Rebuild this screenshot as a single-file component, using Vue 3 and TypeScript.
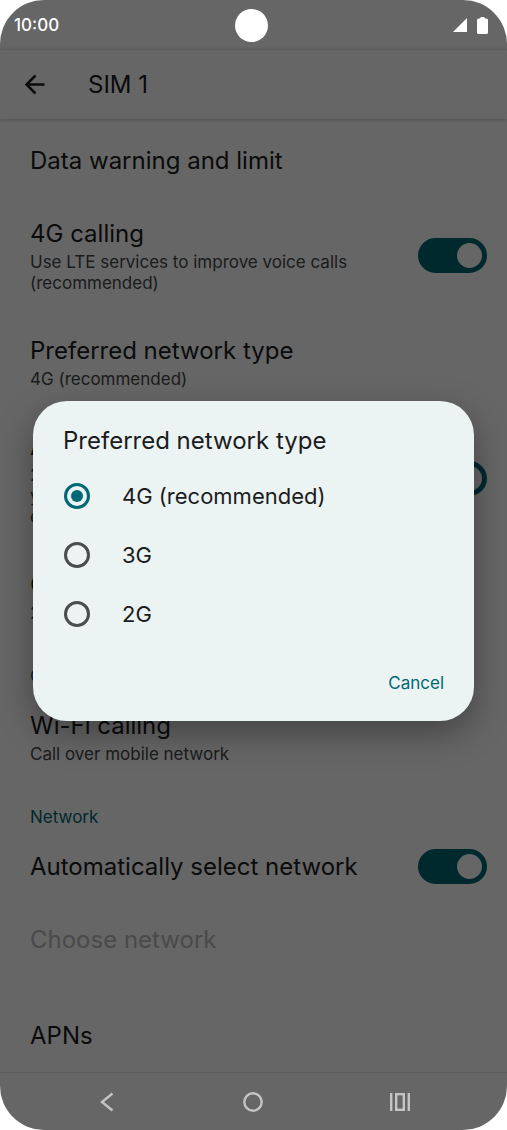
<script setup lang="ts">
import { ref } from 'vue'

interface Item {
  kind: 'row' | 'category'
  title: string
  summary?: string
  toggle?: boolean
  disabled?: boolean
}

const items = ref<Item[]>([
  { kind: 'row', title: 'Data warning and limit' },
  {
    kind: 'row',
    title: '4G calling',
    summary: 'Use LTE services to improve voice calls\n(recommended)',
    toggle: true,
  },
  { kind: 'row', title: 'Preferred network type', summary: '4G (recommended)' },
  {
    kind: 'row',
    title: 'Allow 2G',
    summary: '2G is less secure, but may improve\nyour connection in some locations. For\nemergency calls, 2G is always allowed',
    toggle: false,
  },
  { kind: 'row', title: 'Carrier settings version', summary: '2' },
  { kind: 'category', title: 'Calling' },
  { kind: 'row', title: 'Wi-Fi calling', summary: 'Call over mobile network' },
  { kind: 'category', title: 'Network' },
  { kind: 'row', title: 'Automatically select network', toggle: true },
  { kind: 'row', title: 'Choose network', summary: '', disabled: true },
  { kind: 'row', title: 'APNs' },
])

const networkTypes = ['4G (recommended)', '3G', '2G']
const selected = ref(networkTypes[0])
</script>

<template>
  <div class="phone">
    <div class="status">
      <span class="clock">10:00</span>
      <span class="camera"></span>
      <span class="indicators">
        <svg width="14" height="14" viewBox="0 0 14 14" aria-label="Signal"><path d="M14 0v14H0z" fill="#fff" /></svg>
        <svg width="11" height="17" viewBox="0 0 11 17" aria-label="Battery">
          <path d="M3 1.500Q3 0 4.500 0h2Q8 0 8 1.500h1.500Q11 1.500 11 3v12.500q0 1.500-1.500 1.500h-8Q0 17 0 15.500V3q0-1.500 1.500-1.500z" fill="#fff" />
        </svg>
      </span>
    </div>

    <header class="appbar">
      <button class="back" type="button" aria-label="Back">
        <svg width="22" height="22" viewBox="0 0 22 22" fill="none" stroke="#1b1c1c" stroke-width="2.500">
          <path d="M20.500 10.500H2.500M11.500 1.500l-9 9 9 9" />
        </svg>
      </button>
      <h1>SIM 1</h1>
    </header>

    <main class="list">
      <template v-for="(item, i) in items" :key="item.title">
        <h2 v-if="item.kind === 'category'" class="category">{{ item.title }}</h2>
        <div v-else class="row" :class="{ disabled: item.disabled }">
          <div class="text">
            <label v-if="item.toggle !== undefined" class="title" :for="'switch-' + i">{{ item.title }}</label>
            <div v-else class="title">{{ item.title }}</div>
            <div v-if="item.summary !== undefined" class="summary">{{ item.summary }}</div>
          </div>
          <input
            v-if="item.toggle !== undefined"
            :id="'switch-' + i"
            v-model="item.toggle"
            class="switch"
            type="checkbox"
            role="switch"
          />
        </div>
      </template>
    </main>

    <div class="scrim">
      <form class="dialog" role="dialog" aria-labelledby="dialog-title" @submit.prevent>
        <h2 id="dialog-title">Preferred network type</h2>
        <label v-for="type in networkTypes" :key="type" class="option">
          <input v-model="selected" type="radio" name="network-type" :value="type" />
          <span>{{ type }}</span>
        </label>
        <div class="actions"><button type="button">Cancel</button></div>
      </form>
    </div>

    <nav class="navbar">
      <button type="button" aria-label="Back">
        <svg width="14" height="20" viewBox="0 0 14 20" fill="none" stroke="#c4c4c4" stroke-width="2.400">
          <path d="M12.500 1.500L2 10l10.500 8.500" />
        </svg>
      </button>
      <button type="button" aria-label="Home">
        <svg width="20" height="20" viewBox="0 0 20 20" fill="none" stroke="#c4c4c4" stroke-width="2.400">
          <circle cx="10" cy="10" r="8.700" />
        </svg>
      </button>
      <button type="button" aria-label="Recent apps">
        <svg width="20" height="18" viewBox="0 0 20 18" fill="none" stroke="#c4c4c4">
          <path d="M1.200 0v18M18.800 0v18" stroke-width="2.400" />
          <rect x="6.200" y="1.200" width="7.600" height="15.600" stroke-width="2.400" />
        </svg>
      </button>
    </nav>
  </div>
</template>

<style>
body {
  margin: 0;
  background: #fff;
}
</style>

<style scoped>
.phone {
  position: relative;
  display: flex;
  flex-direction: column;
  min-height: 100vh;
  border-radius: 44px;
  overflow: hidden;
  background: #fff;
  color: #1b1c1c;
  font-family: Inter, "Noto Sans", sans-serif;
}
.phone * {
  box-sizing: border-box;
}
h1,
h2 {
  margin: 0;
  font-weight: 400;
}
button {
  display: flex;
  padding: 0;
  border: 0;
  background: none;
  font: inherit;
}
.status {
  position: relative;
  z-index: 2;
  display: grid;
  grid-template-columns: 1fr auto 1fr;
  align-items: center;
  height: 49px;
  padding: 1px 19px 0 14px;
  color: #fff;
}
.clock {
  font-size: 17px;
  font-weight: 500;
}
.camera {
  width: 33px;
  height: 33px;
  border-radius: 50%;
  background: #fff;
}
.indicators {
  display: flex;
  justify-content: flex-end;
  align-items: center;
  gap: 10px;
}
.appbar {
  display: flex;
  align-items: center;
  gap: 42px;
  height: 70px;
  padding: 0 24px;
  border-top: 1px solid #e8e8e8;
  box-shadow: 0 1px 4px rgba(0, 0, 0, 0.22);
}
h1 {
  font-size: 24px;
  line-height: 30px;
}
.list {
  flex: 1;
  padding-top: 5px;
}
.row {
  display: flex;
  align-items: center;
  padding: 22px 20px 21px 30px;
}
.text {
  flex: 1;
}
.title {
  display: block;
  font-size: 24px;
  line-height: 30px;
}
.summary {
  min-height: 21px;
  margin: 3px 0 -1px;
  color: #454849;
  font-size: 17px;
  line-height: 21px;
  white-space: pre-line;
}
.disabled .title {
  color: #b8b8b8;
}
.category {
  padding: 22px 30px 2px;
  color: #006874;
  font-size: 17px;
  line-height: 21px;
}
.switch {
  display: flex;
  flex: none;
  align-items: center;
  appearance: none;
  width: 69px;
  height: 35px;
  margin: -4px 0 -2px;
  padding: 0 5px;
  border: 5px solid #006874;
  border-radius: 18px;
}
.switch::before {
  content: "";
  width: 15px;
  height: 15px;
  border-radius: 50%;
  background: #006874;
}
.switch:checked {
  justify-content: flex-end;
  padding: 0;
  background: #006874;
}
.switch:checked::before {
  width: 25px;
  height: 25px;
  background: #fff;
}
.scrim {
  position: absolute;
  inset: 0;
  z-index: 1;
  display: flex;
  flex-direction: column;
  justify-content: center;
  padding: 49px 33px 58px;
  background: rgba(0, 0, 0, 0.6);
}
.dialog {
  padding: 25px 30px 27px;
  border-radius: 34px;
  background: #ebf3f3;
  box-shadow: 0 12px 34px rgba(0, 0, 0, 0.34);
}
.dialog h2 {
  margin-bottom: 11px;
  font-size: 24px;
  line-height: 30px;
}
.option {
  display: flex;
  align-items: center;
  gap: 32px;
  height: 59px;
  font-size: 22px;
}
.option input {
  display: grid;
  place-items: center;
  appearance: none;
  width: 26px;
  height: 26px;
  margin: 0 0 0 1px;
  border: 3px solid #494d4e;
  border-radius: 50%;
}
.option input:checked {
  border-color: #006874;
}
.option input:checked::before {
  content: "";
  width: 12px;
  height: 12px;
  border-radius: 50%;
  background: #006874;
}
.actions {
  display: flex;
  justify-content: flex-end;
  margin-top: 28px;
}
.actions button {
  color: #006874;
  font-size: 17px;
  line-height: 22px;
}
.navbar {
  position: relative;
  z-index: 2;
  display: grid;
  grid-template-columns: repeat(3, 1fr);
  place-items: center;
  height: 58px;
  padding: 0 34px;
  border-top: 1px solid #5a5a5a;
}
</style>
